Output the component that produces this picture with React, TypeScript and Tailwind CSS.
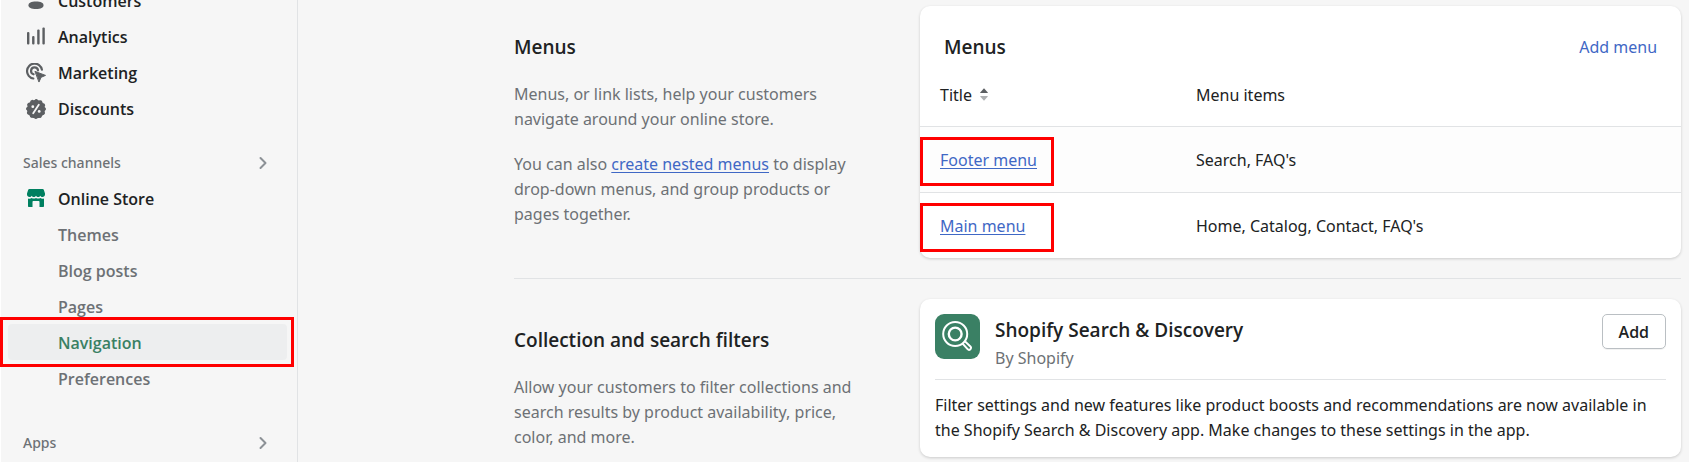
import React from "react";

type IconProps = { className?: string };

function CustomersIcon({ className }: IconProps) {
  return (
    <svg viewBox="0 0 20 20" className={className} fill="currentColor" aria-hidden="true">
      <circle cx="10" cy="4" r="4.5" />
      <path d="M2.500 14.200c0-2.400 2.700-3.700 7.500-3.700s7.500 1.300 7.500 3.700c0 2.500-2.700 3.800-7.500 3.800s-7.500-1.300-7.500-3.800z" />
    </svg>
  );
}

function AnalyticsIcon({ className }: IconProps) {
  return (
    <svg viewBox="0 0 20 20" className={className} fill="currentColor" aria-hidden="true">
      <rect x="1" y="5" width="2.400" height="12.500" rx="1" />
      <rect x="6.100" y="9" width="2.400" height="8.500" rx="1" />
      <rect x="11.200" y="2.500" width="2.400" height="15" rx="1" />
      <rect x="16.400" y="0.500" width="2.400" height="17" rx="1" />
    </svg>
  );
}

function MarketingIcon({ className }: IconProps) {
  return (
    <svg viewBox="0 0 20 20" className={className} fill="none" stroke="currentColor" strokeWidth="2.200" strokeLinecap="round" aria-hidden="true">
      <path d="M15.900 6.600A7.500 7.500 0 1 0 7.300 15.500" />
      <path d="M12 7.300A3.500 3.500 0 1 0 7.600 11.300" />
      <path d="M9.300 8.500l10.200 3.900-4.400 1.900-2 4.400z" fill="currentColor" strokeWidth="1" strokeLinejoin="round" />
    </svg>
  );
}

function DiscountsIcon({ className }: IconProps) {
  return (
    <svg viewBox="0 0 20 20" className={className} aria-hidden="true">
      <circle cx="10" cy="10" r="9.200" fill="currentColor" />
      <circle cx="10" cy="10" r="8.300" fill="none" stroke="currentColor" strokeWidth="3.400" strokeLinecap="round" strokeDasharray="0.1 4.246" />
      <path d="M12.800 5.800L7.200 14.200" stroke="#f6f6f6" strokeWidth="1.800" strokeLinecap="round" />
      <circle cx="6.800" cy="7.700" r="1.400" fill="#f6f6f6" />
      <circle cx="13.200" cy="12.400" r="1.400" fill="#f6f6f6" />
    </svg>
  );
}

function StoreIcon({ className }: IconProps) {
  return (
    <svg viewBox="0 0 20 20" className={className} fill="currentColor" aria-hidden="true">
      <path d="M3.400 0h13.200c.6 0 1 .3 1.200.8L19 4.600v.9c0 1.400-1.100 2.500-2.500 2.500-1 0-1.800-.5-2.200-1.300C13.900 7.500 13.100 8 12.200 8S10.500 7.500 10 6.700C9.500 7.500 8.700 8 7.800 8s-1.700-.5-2.100-1.300C5.300 7.500 4.500 8 3.500 8 2.100 8 1 6.900 1 5.500v-.9L2.200.8C2.400.3 2.800 0 3.400 0z" />
      <path d="M2 9.400c1.500.5 2.700.2 3.700-.5 1.300.9 3 .9 4.300 0 1.300.9 3 .9 4.300 0 1 .7 2.200 1 3.700.5V17c0 .6-.4 1-1 1h-3.500v-5c0-.6-.4-1-1-1h-5c-.6 0-1 .4-1 1v5H3c-.6 0-1-.4-1-1z" />
    </svg>
  );
}

function ChevronIcon() {
  return (
    <svg viewBox="0 0 8 14" className="h-[14px] w-2" fill="none" stroke="#8c9196" strokeWidth="2" strokeLinecap="round" strokeLinejoin="round" aria-hidden="true">
      <path d="M1.500 2L6.500 7l-5 5" />
    </svg>
  );
}

function SortIcon() {
  return (
    <svg viewBox="0 0 8 13" className="h-[13px] w-2" aria-hidden="true">
      <path d="M4 0.300L7.800 4.400Q7.900 5 7.300 5H0.700Q0.100 5 0.200 4.400z" fill="#5c5f62" />
      <path d="M4 12.700L7.800 8.600Q7.900 8 7.300 8H0.700Q0.100 8 0.200 8.600z" fill="#aeb0b2" />
    </svg>
  );
}

function SearchAppIcon() {
  return (
    <svg viewBox="0 0 45 45" className="size-[45px] shrink-0" fill="none" stroke="#fff" strokeWidth="2" aria-hidden="true">
      <rect width="45" height="45" rx="9" fill="#3a8064" stroke="none" />
      <circle cx="20.200" cy="20" r="12" />
      <circle cx="20.200" cy="20" r="6.400" strokeWidth="2.400" />
      <path d="M27.400 29.300l5.200 5.800c.9 1 2 .8 2.800.1.800-.8.900-1.900 0-2.800l-5.800-5.300" strokeLinejoin="round" />
    </svg>
  );
}

function Highlight({ className }: { className: string }) {
  return <span aria-hidden="true" className={`pointer-events-none absolute border-3 border-[#ff0000] ${className}`} />;
}

const primary = [
  { label: "Customers", Icon: CustomersIcon },
  { label: "Analytics", Icon: AnalyticsIcon },
  { label: "Marketing", Icon: MarketingIcon },
  { label: "Discounts", Icon: DiscountsIcon },
];

const storePages = ["Themes", "Blog posts", "Pages", "Navigation", "Preferences"];

function NavSection({ label }: { label: string }) {
  return (
    <button type="button" className="flex h-9 w-full items-center justify-between pt-[2px] pr-5 pl-[15px] font-['Noto_Sans','Open_Sans',sans-serif] text-sm font-medium text-[#6d7175]">
      {label}
      <ChevronIcon />
    </button>
  );
}

function Sidebar() {
  return (
    <nav className="w-[298px] shrink-0 border-r border-l border-r-[#e1e3e5] border-l-white pr-[10px] pl-[7px] font-['Open_Sans','Noto_Sans',sans-serif] text-base font-semibold">
      <ul className="-mt-[18px]">
        {primary.map(({ label, Icon }) => (
          <li key={label}>
            <a href="#" className="flex h-9 items-center gap-3 pt-[2px] pl-[18px] text-[#202223]">
              <Icon className="size-5 text-[#5c5f62]" />
              {label}
            </a>
          </li>
        ))}
      </ul>
      <div className="mt-[18px]">
        <NavSection label="Sales channels" />
        <a href="#" className="flex h-9 items-center gap-3 pt-[2px] pl-[18px] text-[#202223]">
          <StoreIcon className="size-5 text-[#008060]" />
          Online Store
        </a>
        <ul>
          {storePages.map((label) => {
            const active = label === "Navigation";
            return (
              <li key={label} className="relative">
                <a
                  href="#"
                  aria-current={active ? "page" : undefined}
                  className={`flex h-9 items-center rounded-sm pt-[2px] pl-[50px] ${active ? "bg-[#edeeef] text-[#3a8064]" : "text-[#6d7175]"}`}
                >
                  {label}
                </a>
                {active && <Highlight className="-inset-y-[7px] -right-[7px] -left-2" />}
              </li>
            );
          })}
        </ul>
      </div>
      <div className="mt-7">
        <NavSection label="Apps" />
      </div>
    </nav>
  );
}

const menus = [
  { title: "Footer menu", items: "Search, FAQ's" },
  { title: "Main menu", items: "Home, Catalog, Contact, FAQ's" },
];

const cardClass = "rounded-[10px] bg-white shadow-[0_1px_3px_rgba(0,0,0,0.18)]";
const headingClass = "font-['Open_Sans','Noto_Sans',sans-serif] text-[19px] leading-[25px] font-semibold";

function MenusCard() {
  return (
    <div className={cardClass}>
      <div className="flex items-center justify-between px-6 pt-[29px]">
        <h2 className={headingClass}>Menus</h2>
        <a href="#" className="leading-[25px] text-[#3f68c5]">Add menu</a>
      </div>
      <table className="w-full table-fixed text-left">
        <thead>
          <tr className="h-[66px] border-b border-[#e1e3e5]">
            <th className="w-[256px] pt-1 pl-5 font-normal">
              <button type="button" className="flex items-center gap-2">
                Title
                <SortIcon />
              </button>
            </th>
            <th className="pt-1 pl-5 font-normal">Menu items</th>
          </tr>
        </thead>
        <tbody>
          {menus.map(({ title, items }) => (
            <tr key={title} className="h-[66px] border-b border-[#e1e3e5] first:bg-[#fdfdfd] last:border-b-0">
              <td className="relative pt-[2px] pl-5">
                <a href="#" className="text-[#3f68c5] underline underline-offset-2">{title}</a>
                <Highlight className="top-[10px] left-0 h-[49px] w-[134px]" />
              </td>
              <td className="pt-[2px] pl-5">{items}</td>
            </tr>
          ))}
        </tbody>
      </table>
    </div>
  );
}

function AppCard() {
  return (
    <div className={`${cardClass} px-[15px] pt-[15px] pb-[14px]`}>
      <div className="flex items-start gap-[15px] border-b border-[#e1e3e5] pb-2">
        <SearchAppIcon />
        <div className="grow pt-1">
          <h3 className={headingClass}>Shopify Search &amp; Discovery</h3>
          <p className="pt-[3px] leading-[25px] text-[#6d7175]">By Shopify</p>
        </div>
        <button type="button" className="h-[35px] rounded-[5px] border border-[#babfc3] px-4 font-['Open_Sans','Noto_Sans',sans-serif] font-semibold shadow-[0_1px_0_rgba(0,0,0,0.05)]">
          Add
        </button>
      </div>
      <p className="pt-[13px] leading-[25px]">
        Filter settings and new features like product boosts and recommendations are now available in the Shopify Search &amp; Discovery app. Make changes to these settings in the app.
      </p>
    </div>
  );
}

function Section({ title, description, children }: { title: string; description: React.ReactNode; children: React.ReactNode }) {
  return (
    <section className="flex items-start">
      <div className="w-[406px] shrink-0 pt-[29px] pr-12">
        <h2 className={headingClass}>{title}</h2>
        <div className="flex flex-col gap-5 pt-[22px] leading-[25px] text-[#6d7175]">{description}</div>
      </div>
      <div className="min-w-0 grow">{children}</div>
    </section>
  );
}

export default function App() {
  return (
    <div className="flex h-screen overflow-hidden bg-[#f6f6f6] font-['Noto_Sans','Open_Sans',sans-serif] text-base text-[#202223]">
      <Sidebar />
      <main className="min-w-0 grow pt-[6px] pr-2 pl-[216px]">
        <Section
          title="Menus"
          description={
            <>
              <p>Menus, or link lists, help your customers navigate around your online store.</p>
              <p>
                You can also <a href="#" className="text-[#3f68c5] underline underline-offset-2">create nested menus</a> to display drop-down menus, and group products or pages together.
              </p>
            </>
          }
        >
          <MenusCard />
        </Section>
        <div className="mt-5 border-t border-[#e1e3e5] pt-5">
          <Section
            title="Collection and search filters"
            description={<p>Allow your customers to filter collections and search results by product availability, price, color, and more.</p>}
          >
            <AppCard />
          </Section>
        </div>
      </main>
    </div>
  );
}
